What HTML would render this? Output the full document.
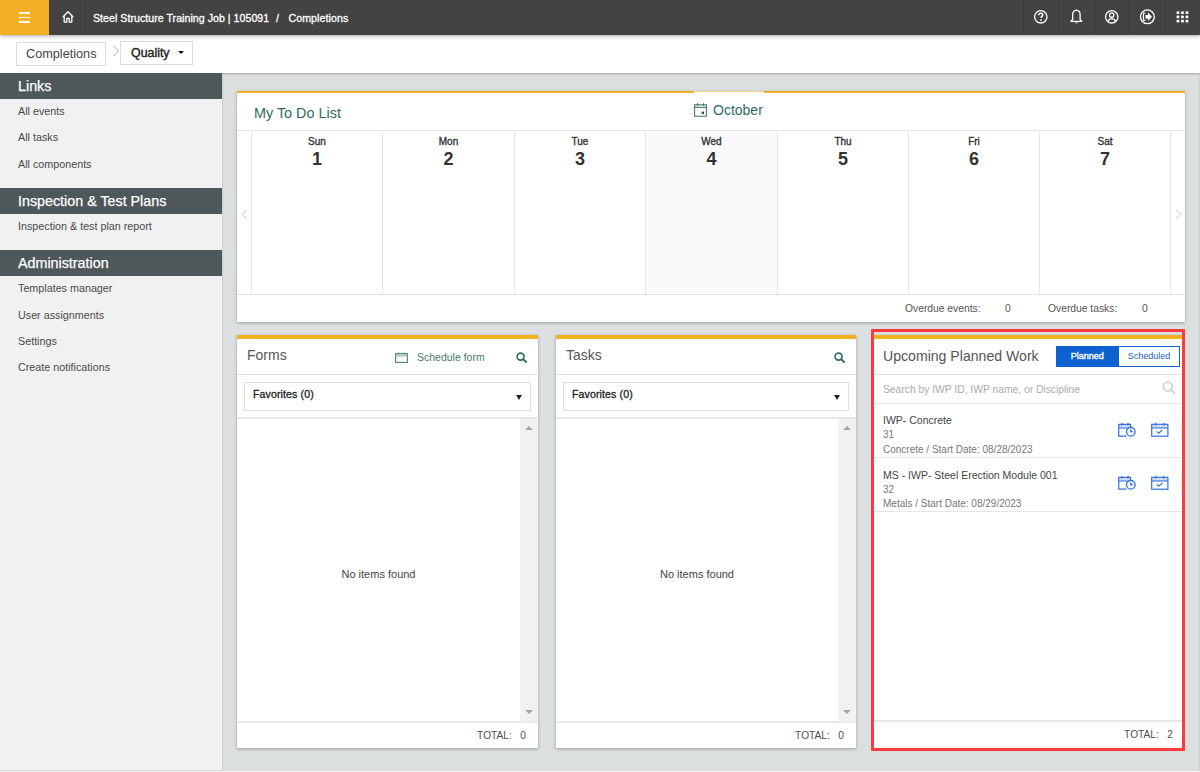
<!DOCTYPE html>
<html><head><meta charset="utf-8">
<style>
*{box-sizing:border-box;margin:0;padding:0}
html,body{width:1200px;height:772px;overflow:hidden;background:#fff;font-family:"Liberation Sans",sans-serif;color:#333}
.abs{position:absolute}
#hdr{position:absolute;left:0;top:0;width:1200px;height:35px;background:#434343;box-shadow:0 1px 4px rgba(0,0,0,.35);z-index:5}
#burger{position:absolute;left:0;top:0;width:49px;height:35px;background:#f2b124}
.vdiv{position:absolute;top:0;width:1px;height:35px;background:#383838}
.htxt{position:absolute;top:12px;font-size:10.6px;color:#fff;-webkit-text-stroke:0.3px #fff;white-space:nowrap;line-height:13px}
#crumb{position:absolute;left:0;top:35px;width:1200px;height:38px;background:#fff}
.cbox{position:absolute;border:1px solid #dcdcdc;background:#fff;font-size:12.7px;line-height:23px;white-space:nowrap}
#side{position:absolute;left:0;top:73px;width:222px;height:699px;background:#f1f1f1}
.sh{position:absolute;left:0;width:222px;height:26px;background:#4e5759;color:#fff;font-size:14.3px;-webkit-text-stroke:0.25px #fff;padding-left:18px;line-height:26px;white-space:nowrap}
.sl{position:absolute;left:18px;font-size:10.75px;color:#4a4a4a;margin-top:-1px;white-space:nowrap;line-height:12px}
#main{position:absolute;left:222px;top:73px;width:978px;height:699px;background:#dcdfe0;box-shadow:inset 0 1px 2px rgba(0,0,0,.25)}
.card{position:absolute;background:#fff;box-shadow:0 1px 3px rgba(0,0,0,.3)}
.ttl{white-space:nowrap;line-height:17px}
.dayc{text-align:center}
.dn{font-size:10px;color:#333;line-height:12px;margin-top:1px;-webkit-text-stroke:0.35px #333}
.dd{font-size:18px;font-weight:bold;color:#333;line-height:20px;margin-top:1px}
.ov{font-size:10.3px;color:#555;line-height:12px;white-space:nowrap;margin-top:-1px}
.ctl{font-size:14px;color:#555;line-height:17px;white-space:nowrap}
.sel{border:1px solid #dedede;font-size:10.6px;color:#222;padding-left:8px;line-height:23px;white-space:nowrap;letter-spacing:0.1px;-webkit-text-stroke:0.3px #222}
.tot{font-size:10.2px;color:#4d4d4d;margin-top:-3px;line-height:12px;white-space:nowrap}
.it1{font-size:10.5px;color:#444;line-height:12px;white-space:nowrap}
.it2{font-size:10px;color:#777;line-height:12px;white-space:nowrap}
</style></head><body>
<div id="hdr">
  <div id="burger">
    <div class="abs" style="left:19px;top:12px;width:11px;height:1.6px;background:#fff"></div>
    <div class="abs" style="left:19px;top:16.5px;width:11px;height:1.6px;background:#fff"></div>
    <div class="abs" style="left:19px;top:21px;width:11px;height:1.6px;background:#fff"></div>
  </div>
  <svg class="abs" style="left:61px;top:10px" width="14" height="14" viewBox="0 0 14 14"><path d="M1.8 7 L7 1.8 L12.2 7 M3.2 5.8 V12 H5.8 V8.3 H8.2 V12 H10.8 V5.8" fill="none" stroke="#fff" stroke-width="1.25" stroke-linejoin="round"/></svg>
  <div class="vdiv" style="left:85px"></div>
  <div class="htxt" style="left:93px;letter-spacing:0.04px">Steel Structure Training Job | 105091</div><div class="htxt" style="left:276px">/</div><div class="htxt" style="left:288.5px;letter-spacing:0.08px">Completions</div>
  <div class="vdiv" style="left:1023px"></div>
  <div class="vdiv" style="left:1058px"></div>
  <div class="vdiv" style="left:1094px"></div>
  <div class="vdiv" style="left:1129px"></div>
  <div class="vdiv" style="left:1165px"></div>
  <svg class="abs" style="left:1033px;top:9px" width="16" height="16" viewBox="0 0 16 16"><circle cx="7.8" cy="7.8" r="6.2" fill="none" stroke="#fff" stroke-width="1.3"/><path d="M5.8 6.2 C5.8 4.9 6.7 4.2 7.8 4.2 C9 4.2 9.8 5 9.8 6 C9.8 7.3 8 7.5 8 9.1" fill="none" stroke="#fff" stroke-width="1.4"/><rect x="7.2" y="10.3" width="1.6" height="1.6" fill="#fff"/></svg>
  <svg class="abs" style="left:1069px;top:9px" width="15" height="16" viewBox="0 0 15 16"><path d="M7.4 1.3 C4.8 1.3 3.7 3.3 3.7 5.6 V10.4 L2 12.3 H12.8 L11.1 10.4 V5.6 C11.1 3.3 10 1.3 7.4 1.3 Z" fill="none" stroke="#fff" stroke-width="1.3" stroke-linejoin="round"/><path d="M6.2 13.3 H8.6 V14.2 H6.2 Z" fill="#fff"/><rect x="6.8" y="0.4" width="1.2" height="1.3" fill="#fff"/></svg>
  <svg class="abs" style="left:1104px;top:9px" width="16" height="16" viewBox="0 0 16 16"><circle cx="7.7" cy="7.8" r="6.2" fill="none" stroke="#fff" stroke-width="1.3"/><circle cx="7.7" cy="6" r="2.2" fill="none" stroke="#fff" stroke-width="1.3"/><path d="M3.9 12.4 C4.8 10.5 6 9.7 7.7 9.7 C9.4 9.7 10.6 10.5 11.5 12.4" fill="none" stroke="#fff" stroke-width="1.3"/></svg>
  <svg class="abs" style="left:1139px;top:9px" width="17" height="16" viewBox="0 0 17 16"><circle cx="8.4" cy="7.8" r="6.9" fill="none" stroke="#fff" stroke-width="1.3"/><path d="M6.4 4.2 H4.4 V11.4 H6.4" fill="none" stroke="#fff" stroke-width="1.1"/><path d="M6.4 6 H8.9 V3.6 L13 7.8 L8.9 12 V9.6 H6.4 Z" fill="#fff"/></svg>
  <svg class="abs" style="left:1176px;top:11px" width="13" height="12" viewBox="0 0 13 12"><g fill="#fff"><rect x="0.6" y="0.4" width="2.7" height="2.6"/><rect x="5.1" y="0.4" width="2.7" height="2.6"/><rect x="9.6" y="0.4" width="2.7" height="2.6"/><rect x="0.6" y="4.6" width="2.7" height="2.6"/><rect x="5.1" y="4.6" width="2.7" height="2.6"/><rect x="9.6" y="4.6" width="2.7" height="2.6"/><rect x="0.6" y="8.8" width="2.7" height="2.6"/><rect x="5.1" y="8.8" width="2.7" height="2.6"/><rect x="9.6" y="8.8" width="2.7" height="2.6"/></g></svg>
</div>

<div id="crumb">
  <div class="cbox" style="left:16px;top:7px;width:90px;height:24px;padding-left:9px;color:#444">Completions</div>
  <svg class="abs" style="left:112px;top:10px" width="8" height="12" viewBox="0 0 8 12"><path d="M1.5 1 L6.5 6 L1.5 11" fill="none" stroke="#aaa" stroke-width="1"/></svg>
  <div class="cbox" style="left:120px;top:6px;width:73px;height:24px;padding-left:10px;color:#222;font-size:12.4px;-webkit-text-stroke:0.4px #222">Quality<div class="abs" style="left:57px;top:9px;width:0;height:0;border-left:3px solid transparent;border-right:3px solid transparent;border-top:3px solid #111"></div></div>
</div>

<div id="side">
  <div class="sh" style="top:0">Links</div>
  <div class="sl" style="top:33px">All events</div>
  <div class="sl" style="top:59px">All tasks</div>
  <div class="sl" style="top:86px">All components</div>
  <div class="sh" style="top:115px">Inspection &amp; Test Plans</div>
  <div class="sl" style="top:148px">Inspection &amp; test plan report</div>
  <div class="sh" style="top:177px">Administration</div>
  <div class="sl" style="top:210px">Templates manager</div>
  <div class="sl" style="top:237px">User assignments</div>
  <div class="sl" style="top:263px">Settings</div>
  <div class="sl" style="top:289px">Create notifications</div>
</div>

<div id="main"></div>

<!-- Calendar card -->
<div class="card" style="left:237px;top:91px;width:948px;height:231px;border-top:2px solid #f2b124">
  <div class="abs" style="left:457px;top:-2px;width:70px;height:2px;background:#fff"></div>
  <div class="abs" style="left:457px;top:-2px;width:70px;height:1px;background:#f7d58c"></div>
  <div class="abs ttl" style="left:17px;top:12px;font-size:14.4px;color:#2f6b5f">My To Do List</div>
  <svg class="abs" style="left:457px;top:10px" width="13" height="14" viewBox="0 0 13 14"><rect x="1" y="2.2" width="11" height="2" fill="#d9e2e0"/><rect x="0.6" y="1.8" width="11.8" height="11.4" fill="none" stroke="#3a7569" stroke-width="1"/><line x1="0.6" y1="4.5" x2="12.4" y2="4.5" stroke="#3a7569" stroke-width="0.9"/><rect x="3" y="0.3" width="1.1" height="2.6" fill="#3a7569"/><rect x="8.9" y="0.3" width="1.1" height="2.6" fill="#3a7569"/><rect x="7.6" y="8.6" width="2.4" height="2.4" fill="#1f5e50"/></svg>
  <div class="abs ttl" style="left:476px;top:9px;font-size:14px;color:#2f6b5f">October</div>
  <div class="abs" style="left:0;top:37px;width:948px;height:1px;background:#e3e3e3"></div>
  <div class="abs" style="left:408px;top:39px;width:132px;height:163px;background:#fafafa"></div>
<div class="abs" style="left:14px;top:39px;width:1px;height:163px;background:#e6e6e6"></div>
<div class="abs" style="left:145px;top:39px;width:1px;height:163px;background:#e6e6e6"></div>
<div class="abs" style="left:277px;top:39px;width:1px;height:163px;background:#e6e6e6"></div>
<div class="abs" style="left:408px;top:39px;width:1px;height:163px;background:#e6e6e6"></div>
<div class="abs" style="left:540px;top:39px;width:1px;height:163px;background:#e6e6e6"></div>
<div class="abs" style="left:671px;top:39px;width:1px;height:163px;background:#e6e6e6"></div>
<div class="abs" style="left:802px;top:39px;width:1px;height:163px;background:#e6e6e6"></div>
<div class="abs" style="left:933px;top:39px;width:1px;height:163px;background:#e6e6e6"></div>
<div class="abs dayc" style="left:14px;top:42px;width:132px"><div class="dn">Sun</div><div class="dd">1</div></div>
<div class="abs dayc" style="left:145px;top:42px;width:133px"><div class="dn">Mon</div><div class="dd">2</div></div>
<div class="abs dayc" style="left:277px;top:42px;width:132px"><div class="dn">Tue</div><div class="dd">3</div></div>
<div class="abs dayc" style="left:408px;top:42px;width:133px"><div class="dn">Wed</div><div class="dd">4</div></div>
<div class="abs dayc" style="left:540px;top:42px;width:132px"><div class="dn">Thu</div><div class="dd">5</div></div>
<div class="abs dayc" style="left:671px;top:42px;width:132px"><div class="dn">Fri</div><div class="dd">6</div></div>
<div class="abs dayc" style="left:802px;top:42px;width:132px"><div class="dn">Sat</div><div class="dd">7</div></div>
  <div class="abs" style="left:0;top:201px;width:948px;height:1px;background:#e3e3e3"></div>
  <svg class="abs" style="left:4px;top:116px" width="7" height="11" viewBox="0 0 7 11"><path d="M6 0.8 L1.2 5.5 L6 10.2" fill="none" stroke="#c8c8c8" stroke-width="1"/></svg>
  <svg class="abs" style="left:937.5px;top:116px" width="7" height="11" viewBox="0 0 7 11"><path d="M1 0.8 L5.8 5.5 L1 10.2" fill="none" stroke="#c8c8c8" stroke-width="1"/></svg>
  <div class="abs ov" style="left:668px;top:211px">Overdue events:</div>
  <div class="abs ov" style="left:768px;top:211px">0</div>
  <div class="abs ov" style="left:811px;top:211px">Overdue tasks:</div>
  <div class="abs ov" style="left:905px;top:211px">0</div>
</div>

<div class="card" style="left:237px;top:335px;width:301px;height:413px;border-top:4px solid #f2b124">
  <div class="abs ctl" style="left:10px;top:8px">Forms</div>
  <svg class="abs" style="left:158px;top:13px" width="13" height="11" viewBox="0 0 13 11"><rect x="0.6" y="1.6" width="11.8" height="8.8" fill="none" stroke="#4a8577" stroke-width="1.1"/><rect x="1.1" y="2.1" width="10.8" height="1.7" fill="#c9d1cf"/><line x1="0.6" y1="3.9" x2="12.4" y2="3.9" stroke="#7fa59b" stroke-width="0.8"/><rect x="3" y="0.4" width="1" height="2" fill="#6e958a"/><rect x="9" y="0.4" width="1" height="2" fill="#6e958a"/></svg>
  <div class="abs" style="left:180px;top:12px;font-size:10.5px;color:#3f7d6c;line-height:12px">Schedule form</div>
  <svg class="abs" style="left:279px;top:13px" width="11" height="11" viewBox="0 0 11 11"><circle cx="4.6" cy="4.6" r="3.5" fill="none" stroke="#2f6b5f" stroke-width="1.6"/><line x1="7.2" y1="7.2" x2="10" y2="10" stroke="#2f6b5f" stroke-width="1.9" stroke-linecap="round"/></svg>
  <div class="abs" style="left:0;top:35px;width:301px;height:1px;background:#e1e1e1"></div>
  <div class="abs sel" style="left:7px;top:43px;width:287px;height:29px">Favorites (0)<div class="abs" style="right:8.5px;top:11.5px;width:0;height:0;border-left:3.5px solid transparent;border-right:3.5px solid transparent;border-top:5px solid #222"></div></div>
  <div class="abs" style="left:0;top:78px;width:301px;height:2px;background:#e6e6e6"></div>
  <div class="abs" style="left:283px;top:80px;width:18px;height:302px;background:#f1f1f1"></div>
  <div class="abs" style="left:288px;top:87px;width:0;height:0;border-left:4px solid transparent;border-right:4px solid transparent;border-bottom:4px solid #a3a3a3"></div>
  <div class="abs" style="left:288px;top:371px;width:0;height:0;border-left:4px solid transparent;border-right:4px solid transparent;border-top:4px solid #a3a3a3"></div>
  <div class="abs" style="left:0;top:229px;width:283px;text-align:center;font-size:11px;color:#444;line-height:12px">No items found</div>
  <div class="abs" style="left:0;top:382px;width:301px;height:2px;background:#e9e9e9"></div>
  <div class="abs tot" style="right:12px;top:394px">TOTAL:&nbsp;&nbsp; 0</div>
</div>
<div class="card" style="left:556px;top:335px;width:300px;height:413px;border-top:4px solid #f2b124">
  <div class="abs ctl" style="left:10px;top:8px">Tasks</div>
  
  <svg class="abs" style="left:278px;top:13px" width="11" height="11" viewBox="0 0 11 11"><circle cx="4.6" cy="4.6" r="3.5" fill="none" stroke="#2f6b5f" stroke-width="1.6"/><line x1="7.2" y1="7.2" x2="10" y2="10" stroke="#2f6b5f" stroke-width="1.9" stroke-linecap="round"/></svg>
  <div class="abs" style="left:0;top:35px;width:300px;height:1px;background:#e1e1e1"></div>
  <div class="abs sel" style="left:7px;top:43px;width:286px;height:29px">Favorites (0)<div class="abs" style="right:8.5px;top:11.5px;width:0;height:0;border-left:3.5px solid transparent;border-right:3.5px solid transparent;border-top:5px solid #222"></div></div>
  <div class="abs" style="left:0;top:78px;width:300px;height:2px;background:#e6e6e6"></div>
  <div class="abs" style="left:282px;top:80px;width:18px;height:302px;background:#f1f1f1"></div>
  <div class="abs" style="left:287px;top:87px;width:0;height:0;border-left:4px solid transparent;border-right:4px solid transparent;border-bottom:4px solid #a3a3a3"></div>
  <div class="abs" style="left:287px;top:371px;width:0;height:0;border-left:4px solid transparent;border-right:4px solid transparent;border-top:4px solid #a3a3a3"></div>
  <div class="abs" style="left:0;top:229px;width:282px;text-align:center;font-size:11px;color:#444;line-height:12px">No items found</div>
  <div class="abs" style="left:0;top:382px;width:300px;height:2px;background:#e9e9e9"></div>
  <div class="abs tot" style="right:12px;top:394px">TOTAL:&nbsp;&nbsp; 0</div>
</div>
<div class="card" style="left:874px;top:335px;width:308px;height:413px;border-top:4px solid #f2b124">
  <div class="abs ctl" style="left:9px;top:9px;font-size:14.1px">Upcoming Planned Work</div>
  <div class="abs" style="left:182px;top:6.5px;width:124px;height:21px;border:1px solid #1565d0;background:#fff"></div>
  <div class="abs" style="left:182px;top:6.5px;width:62.5px;height:21px;background:#0d62cf;color:#fff;font-size:9px;-webkit-text-stroke:0.35px #fff;text-align:center;line-height:21px">Planned</div>
  <div class="abs" style="left:244px;top:6.5px;width:62px;height:21px;color:#1d62c0;font-size:9px;text-align:center;line-height:21px">Scheduled</div>
  <div class="abs" style="left:0;top:35px;width:308px;height:1px;background:#e1e1e1"></div>
  <div class="abs" style="left:9px;top:45px;font-size:10.3px;color:#aaa;line-height:12px;white-space:nowrap">Search by IWP ID, IWP name, or Discipline</div>
  <svg class="abs" style="left:288px;top:42px" width="14" height="14" viewBox="0 0 14 14"><circle cx="5.8" cy="5.6" r="4.4" fill="none" stroke="#d2d2d2" stroke-width="1.8"/><line x1="9" y1="8.8" x2="12.6" y2="12.4" stroke="#d2d2d2" stroke-width="2" stroke-linecap="round"/></svg>
  <div class="abs" style="left:0;top:64px;width:308px;height:1px;background:#e6e6e6"></div>
  <div class="abs it1" style="left:9px;top:75px">IWP- Concrete</div>
  <div class="abs it2" style="left:9px;top:90px">31</div>
  <div class="abs it2" style="left:9px;top:105px">Concrete / Start Date: 08/28/2023</div>
  <svg class="abs" style="left:243.5px;top:84px" width="19" height="15" viewBox="0 0 19 15"><rect x="1" y="1.5" width="11.5" height="3.5" fill="#d3def4"/><path d="M8.5 13.2 H0.7 V1.3 H12.6 V4.2 M0.7 5 H11" fill="none" stroke="#3571da" stroke-width="1.2"/><rect x="3.3" y="0" width="1.3" height="2.6" fill="#3571da"/><rect x="9.4" y="0" width="1.3" height="2.6" fill="#3571da"/><circle cx="12.8" cy="8.8" r="4.3" fill="#fff" stroke="#3571da" stroke-width="1.3"/><path d="M12.6 6.6 V9 H14.6 Z" fill="#3571da" stroke="#3571da" stroke-width="0.8" stroke-linejoin="round"/></svg>
<svg class="abs" style="left:277px;top:84px" width="18" height="15" viewBox="0 0 18 15"><rect x="1" y="1.5" width="15.5" height="3.5" fill="#d3def4"/><rect x="0.7" y="1.3" width="16.2" height="11.9" fill="none" stroke="#3571da" stroke-width="1.2"/><line x1="0.7" y1="5" x2="16.9" y2="5" stroke="#3571da" stroke-width="1.1"/><rect x="4" y="0" width="1.3" height="2.6" fill="#3571da"/><rect x="12.2" y="0" width="1.3" height="2.6" fill="#3571da"/><path d="M5.6 8.4 L7.7 10.3 L11.4 6.9" fill="none" stroke="#3571da" stroke-width="1.2"/></svg>
  <div class="abs" style="left:0;top:118px;width:308px;height:1px;background:#e6e6e6"></div>
  <div class="abs it1" style="left:9px;top:130px">MS - IWP- Steel Erection Module 001</div>
  <div class="abs it2" style="left:9px;top:145px">32</div>
  <div class="abs it2" style="left:9px;top:159px">Metals / Start Date: 08/29/2023</div>
  <svg class="abs" style="left:243.5px;top:137px" width="19" height="15" viewBox="0 0 19 15"><rect x="1" y="1.5" width="11.5" height="3.5" fill="#d3def4"/><path d="M8.5 13.2 H0.7 V1.3 H12.6 V4.2 M0.7 5 H11" fill="none" stroke="#3571da" stroke-width="1.2"/><rect x="3.3" y="0" width="1.3" height="2.6" fill="#3571da"/><rect x="9.4" y="0" width="1.3" height="2.6" fill="#3571da"/><circle cx="12.8" cy="8.8" r="4.3" fill="#fff" stroke="#3571da" stroke-width="1.3"/><path d="M12.6 6.6 V9 H14.6 Z" fill="#3571da" stroke="#3571da" stroke-width="0.8" stroke-linejoin="round"/></svg>
<svg class="abs" style="left:277px;top:137px" width="18" height="15" viewBox="0 0 18 15"><rect x="1" y="1.5" width="15.5" height="3.5" fill="#d3def4"/><rect x="0.7" y="1.3" width="16.2" height="11.9" fill="none" stroke="#3571da" stroke-width="1.2"/><line x1="0.7" y1="5" x2="16.9" y2="5" stroke="#3571da" stroke-width="1.1"/><rect x="4" y="0" width="1.3" height="2.6" fill="#3571da"/><rect x="12.2" y="0" width="1.3" height="2.6" fill="#3571da"/><path d="M5.6 8.4 L7.7 10.3 L11.4 6.9" fill="none" stroke="#3571da" stroke-width="1.2"/></svg>
  <div class="abs" style="left:0;top:172px;width:308px;height:1px;background:#e6e6e6"></div>
  <div class="abs" style="left:0;top:381px;width:308px;height:2px;background:#e6e6e6"></div>
  <div class="abs tot" style="right:9px;top:393px">TOTAL:&nbsp;&nbsp; 2</div>
</div>


<div class="abs" style="left:871px;top:329px;width:314px;height:422px;border:3px solid #fd3a3d;z-index:4"></div>

<div class="abs" style="left:0;top:770px;width:1200px;height:1px;background:#d9d9d9;z-index:6"></div><div class="abs" style="left:0;top:771px;width:1200px;height:1px;background:#f4f4f4;z-index:6"></div>
</body></html>
